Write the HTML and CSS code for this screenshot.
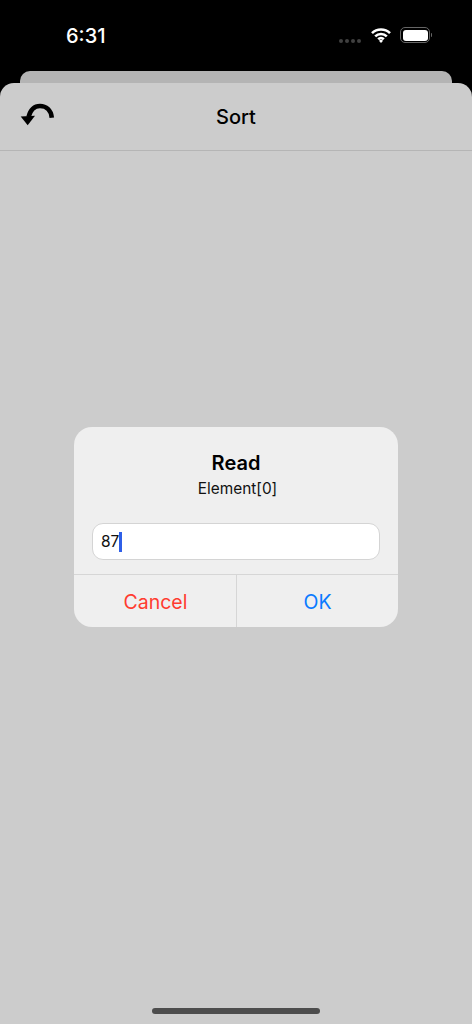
FILE: index.html
```html
<!DOCTYPE html>
<html lang="en">
<head>
    <meta charset="UTF-8">
    <title>Sort</title>
    <link rel="stylesheet" href="styles.css">
</head>
<body>

<div class="status-bar">
    <span class="time">6:31</span>
    <div class="status-icons">
        <div class="signal-dots">
            <span></span><span></span><span></span><span></span>
        </div>
        <svg class="wifi" width="20" height="15" viewBox="0 0 20 15">
            <path d="M1 5.2 A12.8 12.8 0 0 1 19 5.2" />
            <path d="M4.2 8.4 A8.2 8.2 0 0 1 15.8 8.4" />
            <path d="M7.2 11.3 A4 4 0 0 1 12.8 11.3" />
            <polygon class="wifi-tip" points="10,15 7.9,12.7 10,11.6 12.1,12.7" />
        </svg>
        <div class="battery">
            <div class="battery-fill"></div>
        </div>
    </div>
</div>

<div class="back-sheet"></div>

<div class="sheet">
    <header class="nav-bar">
        <svg class="back-icon" width="36" height="30" viewBox="0 0 36 30">
            <path class="back-arc" d="M31.8 19.7 C31 12 26 8 20 8 C14.5 8 10.5 11.5 8.5 19" />
            <polygon class="back-head" points="0.7,18.5 15,17.8 7.7,27.3" />
        </svg>
        <h1 class="nav-title">Sort</h1>
    </header>
    <div class="home-indicator"></div>
</div>

<div class="dialog">
    <div class="dialog-body">
        <h2 class="dialog-title">Read</h2>
        <p class="dialog-message">Element[0]</p>
        <div class="text-field">87<span class="caret"></span></div>
    </div>
    <div class="dialog-actions">
        <button type="button" class="action cancel">Cancel</button>
        <button type="button" class="action ok">OK</button>
    </div>
</div>

</body>
</html>
```

FILE: styles.css
```css
* { box-sizing: border-box; margin: 0; padding: 0 }
html, body { height: 100% }
body {
    font-family: Inter, "Liberation Sans", sans-serif;
    background: #000;
    color: #000;
    display: flex;
    flex-direction: column;
    overflow: hidden;
    position: relative;
}

.status-bar {
    height: 71px;
    flex: none;
    display: flex;
    justify-content: space-between;
    padding: 24px 42px 0 66px;
}
.time {
    color: #fff;
    font-size: 20px;
    font-weight: 500;
    line-height: 24px;
}
.status-icons {
    display: flex;
    align-items: flex-start;
    height: 20px;
    padding-top: 4px;
}
.signal-dots {
    display: flex;
    gap: 2px;
    margin: 11px 10px 0 0;
}
.signal-dots span {
    width: 4px;
    height: 4px;
    border-radius: 50%;
    background: #404040;
}
.wifi { margin-right: 9px; }
.wifi path {
    fill: none;
    stroke: #fff;
    stroke-width: 2.6;
}
.wifi-tip { fill: #fff }
.battery {
    width: 30px;
    height: 16px;
    border: 1px solid #666;
    border-radius: 5px;
    padding: 1.5px;
    margin-top: -1px;
    position: relative;
}
.battery::after {
    content: "";
    position: absolute;
    right: -3px;
    top: 5px;
    width: 1.5px;
    height: 4px;
    background: #666;
    border-radius: 0 1px 1px 0;
}
.battery-fill {
    height: 100%;
    background: #fff;
    border-radius: 3px;
}

.back-sheet {
    height: 12px;
    flex: none;
    margin: 0 20px;
    background: #b4b4b4;
    border-radius: 10px 10px 0 0;
}

.sheet {
    flex: 1;
    background: #ccc;
    border-radius: 14px 14px 0 0;
    display: flex;
    flex-direction: column;
}
.nav-bar {
    height: 68px;
    flex: none;
    display: flex;
    align-items: center;
    justify-content: center;
    position: relative;
    border-bottom: 1px solid #b5b5b5;
}
.nav-title {
    font-size: 20px;
    font-weight: 500;
    line-height: 24px;
    margin-top: 1px;
}
.back-icon {
    position: absolute;
    left: 20px;
    top: 15px;
}
.back-arc {
    fill: none;
    stroke: #000;
    stroke-width: 4.6;
}
.back-head { fill: #000 }

.home-indicator {
    width: 168px;
    height: 6px;
    border-radius: 3px;
    background: #4d4d4d;
    margin: auto auto 10px;
}

.dialog {
    position: absolute;
    left: 74px;
    top: 427px;
    width: 324px;
    height: 200px;
    background: #efefef;
    border-radius: 18px;
    display: flex;
    flex-direction: column;
    overflow: hidden;
}
.dialog-body {
    height: 148px;
    flex: none;
    padding: 24px 18px 0;
    text-align: center;
    border-bottom: 1px solid #d6d6d6;
}
.dialog-title {
    font-size: 20px;
    font-weight: 600;
    line-height: 24px;
}
.dialog-message {
    font-size: 15.4px;
    line-height: 20px;
    margin-top: 4px;
    padding-left: 3px;
    color: #111;
}
.text-field {
    height: 37px;
    margin-top: 24px;
    padding-left: 8px;
    display: flex;
    align-items: center;
    background: #fff;
    border: 1px solid #d4d4d4;
    border-radius: 11px;
    font-size: 15.5px;
    color: #111;
}
.caret {
    width: 3px;
    height: 20px;
    background: #2f5fe8;
}

.dialog-actions {
    flex: 1;
    display: flex;
}
.action {
    background: transparent;
    border: none;
    padding-top: 2px;
    font-family: inherit;
    font-size: 19.5px;
    cursor: pointer;
}
.cancel {
    width: 163px;
    flex: none;
    color: #ff3b30;
    border-right: 1px solid #d6d6d6;
    padding-left: 1px;
}
.ok {
    flex: 1;
    color: #0a7aff;
}
```
